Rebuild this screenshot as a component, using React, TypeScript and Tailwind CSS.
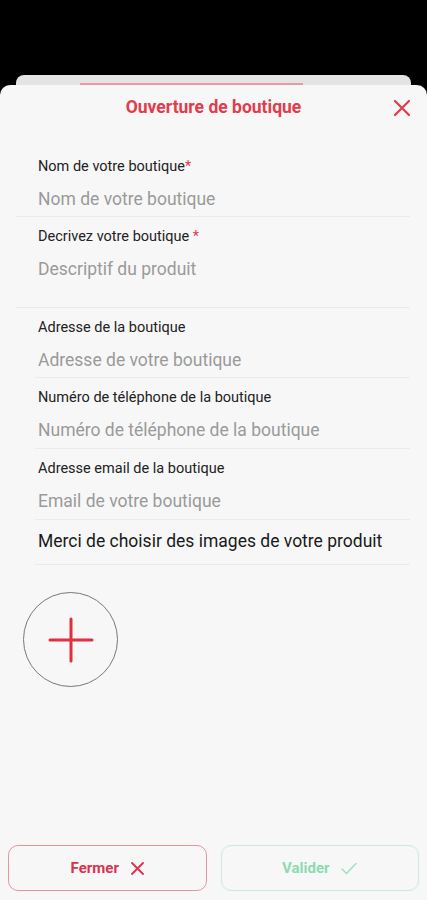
const fields = [
  { label: "Nom de votre boutique", star: "*", placeholder: "Nom de votre boutique", h: "h-[70px]", inset: true },
  { label: "Decrivez votre boutique", star: " *", placeholder: "Descriptif du produit", h: "h-[91px]", inset: true },
  { label: "Adresse de la boutique", star: "", placeholder: "Adresse de votre boutique", h: "h-[70px]", inset: false },
  { label: "Numéro de téléphone de la boutique", star: "", placeholder: "Numéro de téléphone de la boutique", h: "h-[71px]", inset: false },
  { label: "Adresse email de la boutique", star: "", placeholder: "Email de votre boutique", h: "h-[71px]", inset: false },
];

export default function App() {
  return (
    <div className="h-[900px] w-[427px] overflow-hidden bg-black font-['Roboto',sans-serif] flex flex-col">
      <div className="h-[75px] shrink-0" />
      {/* sheet stacked behind */}
      <div className="mx-[16px] h-[10px] shrink-0 rounded-t-[8px] bg-[#e4e4e4] pl-[64px]">
        <div className="mt-[8px] h-[2px] w-[223px] bg-[#e79a9f]" />
      </div>
      <div className="flex-1 rounded-t-[10px] bg-[#f7f7f7] flex flex-col">
        <div className="relative h-[45px] flex items-center justify-center">
          <span className="text-[17.5px] font-bold text-[#e23b4b]">Ouverture de boutique</span>
          <svg className="absolute right-[16px] top-[14px]" width="18" height="18" viewBox="0 0 18 18" fill="none" stroke="#e23b4b" strokeWidth="2.2" strokeLinecap="round">
            <path d="M2 2L16 16M16 2L2 16" />
          </svg>
        </div>
        <div className="mt-[17px] flex flex-col">
          {fields.map((f, i) => (
            <div
              key={i}
              className={`mr-[17px] border-b border-[#ebebeb] pt-[12px] ${f.inset ? "ml-[16px] pl-[22px]" : "ml-[35px] pl-[3px]"} ${f.h}`}
            >
              <div className="text-[14.5px] leading-[16px] text-[#222]">
                {f.label}
                {f.star && <span className="text-[#e23b4b]">{f.star}</span>}
              </div>
              <div className="mt-[15px] text-[17.5px] leading-[18px] text-[#9a9a9a]">{f.placeholder}</div>
            </div>
          ))}
          <div className="ml-[35px] mr-[17px] h-[45px] border-b border-[#ebebeb] pl-[3px] pt-[11px] text-[17.5px] leading-[20px] text-[#1a1a1a]">
            Merci de choisir des images de votre produit
          </div>
        </div>
        <div className="mt-[27px] ml-[23px] h-[95px] w-[95px] rounded-full border border-[#777] flex items-center justify-center">
          <svg width="46" height="46" viewBox="0 0 46 46" stroke="#e0303f" strokeWidth="3" strokeLinecap="round">
            <path d="M23 2V44M2 23H44" />
          </svg>
        </div>
        <div className="flex-1" />
        <div className="mb-[9px] flex gap-[14px] px-[8px]">
          <button className="h-[46px] flex-1 rounded-[10px] border border-[#e693a2] flex items-center justify-center gap-[12px]">
            <span className="text-[15px] font-bold text-[#d9334f]">Fermer</span>
            <svg width="13" height="13" viewBox="0 0 13 13" stroke="#d9334f" strokeWidth="1.8" strokeLinecap="round">
              <path d="M1 1L12 12M12 1L1 12" />
            </svg>
          </button>
          <button className="h-[46px] flex-1 rounded-[10px] border border-[#c8ecd8] flex items-center justify-center gap-[12px]">
            <span className="text-[15px] font-bold text-[#8ddbb0]">Valider</span>
            <svg width="16" height="13" viewBox="0 0 16 13" fill="none" stroke="#9ddfbb" strokeWidth="1.4" strokeLinecap="round">
              <path d="M1 7L5.5 11.5L15 1.5" />
            </svg>
          </button>
        </div>
      </div>
    </div>
  );
}
